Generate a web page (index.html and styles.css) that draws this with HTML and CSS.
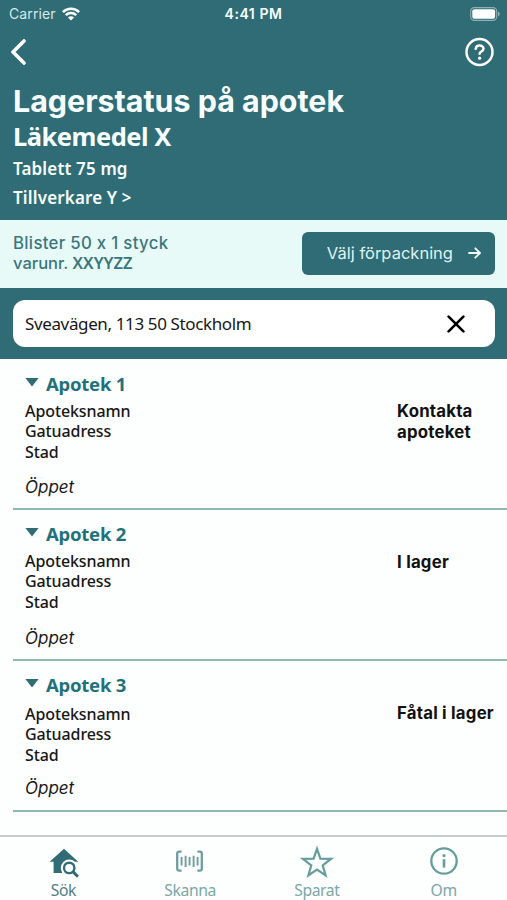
FILE: index.html
```
<!DOCTYPE html>
<html lang="sv">
<head>
  <meta charset="utf-8" />
  <meta name="viewport" content="width=device-width,initial-scale=1" />
  <title>Lagerstatus på apotek</title>
  <link rel="stylesheet" href="styles.css">
</head>

<body>
  <header class="top">
    <div class="status-bar">
      <div class="carrier">
        <span class="carrier-name">Carrier</span>
        <svg width="18" height="14" viewBox="0 0 18 14" fill="none" stroke="#fff" stroke-width="2.5">
          <path d="M.9 5.1a11.5 11.5 0 0 1 16.2 0"/>
          <path d="M3.8 8.2a7.4 7.4 0 0 1 10.4 0"/>
          <path d="M9 13.6 5.9 10.5a4.4 4.4 0 0 1 6.2 0z" fill="#fff" stroke="none"/>
        </svg>
      </div>
      <span class="clock">4:41 PM</span>
      <svg class="battery" width="30" height="14" viewBox="0 0 30 14">
        <rect x=".7" y=".6" width="26" height="12.8" rx="3.6" fill="none" stroke="#8fb0b5" stroke-width="1.1"/>
        <rect x="2.3" y="2.2" width="22.8" height="9.6" rx="2" fill="#fff"/>
        <path d="M28 4.6v4.8c1-.4 1.7-1.3 1.7-2.4S29 5 28 4.6z" fill="#8fb0b5"/>
      </svg>
    </div>

    <div class="nav-row">
      <button class="icon-btn" aria-label="Tillbaka">
        <svg width="16" height="26" viewBox="0 0 16 26" fill="none" stroke="#fff" stroke-width="3.6" stroke-linecap="round" stroke-linejoin="round">
          <path d="M14 2 3 13l11 11"/>
        </svg>
      </button>
      <button class="icon-btn" aria-label="Hjälp">
        <svg width="30" height="30" viewBox="0 0 30 30" fill="none" stroke="#fff" stroke-width="2.5" stroke-linecap="round" stroke-linejoin="round">
          <circle cx="15.5" cy="15" r="13"/>
          <path d="M11.7 11.8c.3-2.2 1.9-3.4 3.9-3.4 2.2 0 3.9 1.4 3.9 3.3 0 2.8-3.9 2.8-3.9 5"/>
          <circle cx="15.6" cy="21.2" r="1.6" fill="#fff" stroke="none"/>
        </svg>
      </button>
    </div>

    <h1>Lagerstatus på apotek</h1>
    <h2>Läkemedel X</h2>
    <p class="strength">Tablett 75 mg</p>
    <p class="maker">Tillverkare Y &gt;</p>
  </header>

  <section class="package">
    <div class="package-info">
      <div class="package-size">Blister 50 x 1 styck</div>
      <div class="package-number">varunr. <span>XXYYZZ</span></div>
    </div>
    <button class="package-btn">
      <span>Välj förpackning</span>
      <svg width="13" height="12" viewBox="0 0 13 12" fill="none" stroke="#effcfb" stroke-width="1.8" stroke-linecap="round" stroke-linejoin="round">
        <path d="M1 6h10.8M7.3 1.3 12 6l-4.7 4.7"/>
      </svg>
    </button>
  </section>

  <section class="search">
    <div class="search-field">
      <span class="search-text">Sveavägen, 113 50 Stockholm</span>
      <svg width="18" height="18" viewBox="0 0 18 18" fill="none" stroke="#000" stroke-width="2.6" stroke-linecap="round">
        <path d="M1.6 1.6l14.8 14.8M16.4 1.6L1.6 16.4"/>
      </svg>
    </div>
  </section>

  <main class="list">
    <article class="pharmacy">
      <h3><i class="caret"></i><span>Apotek 1</span></h3>
      <div class="details">
        <address>Apoteksnamn<br>Gatuadress<br>Stad</address>
        <strong class="stock">Kontakta<br>apoteket</strong>
      </div>
      <em class="hours">Öppet</em>
    </article>

    <article class="pharmacy second">
      <h3><i class="caret"></i><span>Apotek 2</span></h3>
      <div class="details">
        <address>Apoteksnamn<br>Gatuadress<br>Stad</address>
        <strong class="stock">I lager</strong>
      </div>
      <em class="hours">Öppet</em>
    </article>

    <article class="pharmacy third">
      <h3><i class="caret"></i><span>Apotek 3</span></h3>
      <div class="details">
        <address>Apoteksnamn<br>Gatuadress<br>Stad</address>
        <strong class="stock">Fåtal i lager</strong>
      </div>
      <em class="hours">Öppet</em>
    </article>
  </main>

  <nav class="tabs">
    <div class="tab active">
      <svg width="32" height="32" viewBox="0 0 32 32">
        <path d="M2.7 15.7 17 2.7l14.2 13h-3.7V27H6.6V15.7z" fill="#306c75"/>
        <circle cx="22.2" cy="21.9" r="8.4" fill="#fdfefe"/>
        <path d="M15 30h16v-4H15z" fill="#fdfefe"/>
        <circle cx="22.2" cy="21.9" r="5.2" fill="#fdfefe" stroke="#306c75" stroke-width="2.4"/>
        <path d="m26.2 25.9 3.8 3.9" stroke="#306c75" stroke-width="3" stroke-linecap="round"/>
      </svg>
      <span class="tab-label">Sök</span>
    </div>
    <div class="tab">
      <svg width="32" height="32" viewBox="0 0 32 32" fill="none" stroke="#6d9f9f">
        <path d="M7.6 5.6H5.2a2 2 0 0 0-2 2v15a2 2 0 0 0 2 2h2.4M23.4 5.6h2.4a2 2 0 0 1 2 2v15a2 2 0 0 1-2 2h-2.4" stroke-width="2.3"/>
        <path d="M7.6 11v8.4M11.6 9.8V21M15.6 11v8.4M19.6 9.8V21M23.6 11v8.4" stroke-width="1.9"/>
      </svg>
      <span class="tab-label">Skanna</span>
    </div>
    <div class="tab">
      <svg width="34" height="32" viewBox="0 0 34 32" fill="none" stroke="#659d9e" stroke-width="2.2" stroke-miterlimit="10">
        <path d="m17 2.8 3.4 9.9 10.6.2-8.3 6.5 2.9 9.9-8.6-5.8-8.6 5.8 2.9-9.9L3 12.9l10.6-.2z"/>
      </svg>
      <span class="tab-label">Sparat</span>
    </div>
    <div class="tab">
      <svg width="32" height="32" viewBox="0 0 32 32" fill="none" stroke="#659d9e" stroke-width="2.3">
        <circle cx="16" cy="15" r="12.7"/>
        <path d="M16 13.2v8.4" stroke-width="2.6"/>
        <circle cx="16" cy="9.6" r="1.6" fill="#659d9e" stroke="none"/>
      </svg>
      <span class="tab-label">Om</span>
    </div>
  </nav>
</body>
</html>
```
FILE: styles.css
```
:root{
  --teal:#306c75;
  --mint:#e8faf8;
  --heading:#1f727b;
  --line:#8fb8b3;
  --ui:Inter,Roboto,sans-serif;
  --body:"Noto Sans","Open Sans",sans-serif;
}

*{box-sizing:border-box}
html,body{height:100%}
body{
  margin:0; height:900px; overflow:hidden;
  display:flex; flex-direction:column;
  font-family:var(--body); background:#fdfefe; color:#171717;
}
h1,h2,h3,p{margin:0}
svg{display:block; flex:none}
button{border:0; padding:0; background:none; font:inherit; color:inherit; cursor:pointer}
span,address,em,strong,h1,h2,p,.package-info{white-space:nowrap}

/* HEADER */
.top{height:220px; padding:0 13px; background:var(--teal); color:#f7ffff; flex:none}
.status-bar{
  height:27px; margin:0 -6px 0 -4px;
  display:grid; grid-template-columns:1fr auto 1fr; align-items:center;
  font:500 13.5px/27px var(--ui);
}
.carrier{display:flex; align-items:center; gap:6px}
.carrier-name{font-weight:400; font-size:14px; letter-spacing:.1px; color:#d5e8ea}
.clock{font-weight:600; font-size:14px; letter-spacing:.55px; margin-right:2px}
.battery{justify-self:end}
.nav-row{height:50px; display:flex; align-items:center; justify-content:space-between; margin:0 0 0 -3px}
h1{font:700 30.4px/48px var(--ui)}
h2{font-size:25.5px; line-height:22px; font-weight:700; letter-spacing:-.5px}
.strength,.maker{font-size:17px; line-height:28px; font-weight:600; letter-spacing:.15px}
.strength{margin-top:8px}
.maker{line-height:29px}

/* PACKAGE BAND */
.package{
  height:68px; padding:0 12px 2px 13px; background:var(--mint); color:#3b777d; flex:none;
  display:flex; align-items:center; justify-content:space-between;
}
.package-info{font:500 16.5px/20.5px var(--ui); font-feature-settings:"calt" 0}
.package-size{font-size:16.8px; letter-spacing:.3px}
.package-number span{font-family:var(--body); font-weight:600; font-size:16.5px}
.package-btn{
  width:193px; height:43px; border-radius:6px; background:var(--teal); color:#dff3f3;
  display:flex; align-items:center; justify-content:flex-end; gap:15px; padding-right:14px;
  font:400 16.5px/20px var(--ui);
}

/* SEARCH */
.search{height:71px; padding:12px 12px 12px 13px; background:var(--teal); flex:none}
.search-field{
  height:47px; border-radius:12px; background:#fff; padding:0 30px 0 12px;
  display:flex; align-items:center; justify-content:space-between;
  font-size:17px; letter-spacing:-.37px;
}

/* PHARMACIES */
.list{flex:1; padding-left:13px}
.pharmacy{height:151px; padding:12px 0 0 12px; border-bottom:2px solid var(--line)}
h3{display:flex; align-items:center; gap:7px; font-size:18.5px; line-height:26px; font-weight:700; letter-spacing:-.25px; color:var(--heading)}
.caret{width:14px; height:9px; margin-bottom:4px; background:var(--teal); clip-path:polygon(0 0,100% 0,50% 100%)}
.details{display:grid; grid-template-columns:372px 1fr; margin-top:4px}
address{font-style:normal; font-weight:500; font-size:16px; line-height:20.4px; letter-spacing:-.1px}
.stock{font:700 16.8px/20.5px var(--ui); letter-spacing:.22px; color:#111}
.hours{display:block; font:italic 400 17px/24px var(--ui); margin-top:13px}
.second,.third{padding-top:11px}
.second .details{margin-top:4px}
.second .stock{padding-top:1px}
.second .hours{margin-top:14px}
.third .details{margin-top:6px}
.third .stock{margin-top:-1px}
.third .hours{margin-top:11px}

/* TAB BAR */
.tabs{
  height:65px; flex:none; border-top:2px solid #c5cccb; background:#fdfefe;
  display:grid; grid-template-columns:repeat(4,1fr); padding-top:9px;
}
.tab{display:flex; flex-direction:column; align-items:center; color:#7ba7a8; font-size:15.7px; line-height:25px; letter-spacing:-.4px}
.tab.active{color:#527f84}
```
